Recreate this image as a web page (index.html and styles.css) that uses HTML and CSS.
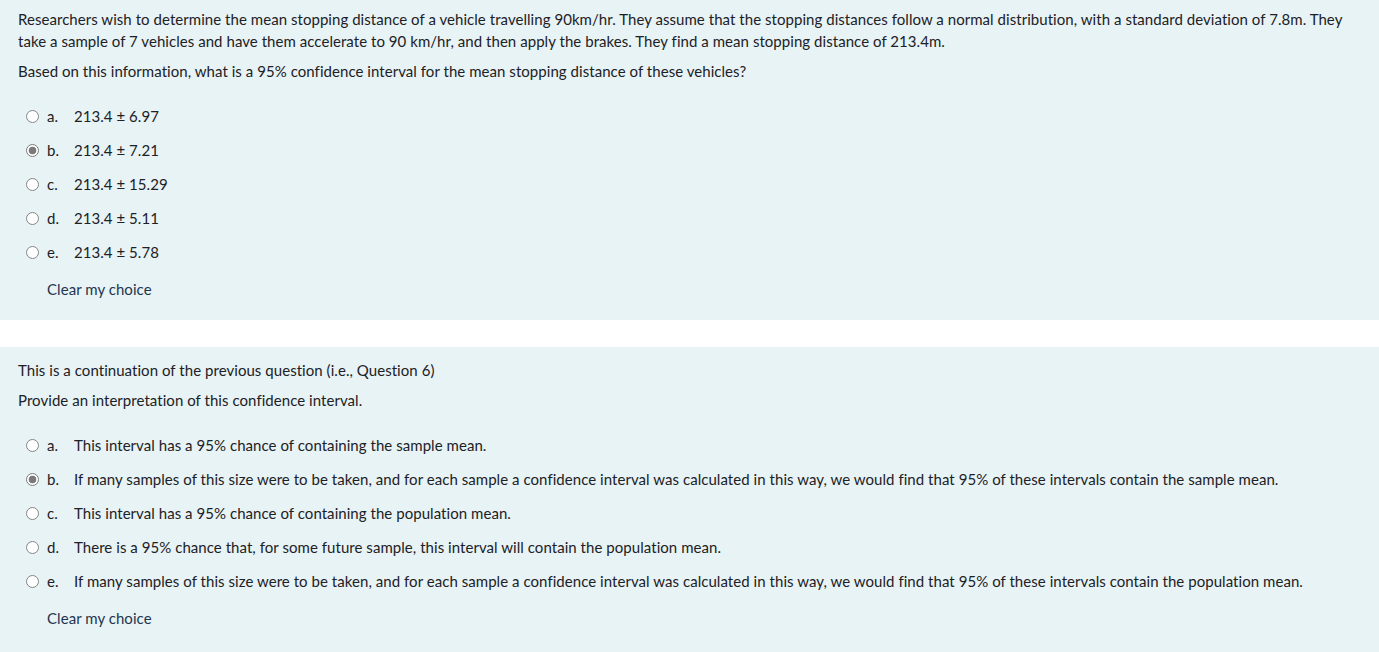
FILE: index.html
```html
<!DOCTYPE html>
<html lang="en">
<head>
<meta charset="utf-8">
<title>Quiz</title>
<link rel="stylesheet" href="styles.css">
</head>
<body>
<div class="que que-first">
  <div class="qtext">
    <p>Researchers wish to determine the mean stopping distance of a vehicle travelling 90km/hr. They assume that the stopping distances follow a normal distribution, with a standard deviation of 7.8m. They take a sample of 7 vehicles and have them accelerate to 90 km/hr, and then apply the brakes. They find a mean stopping distance of 213.4m.</p>
    <p>Based on this information, what is a 95% confidence interval for the mean stopping distance of these vehicles?</p>
  </div>
  <div class="answers">
    <div class="opt"><span class="radio"></span><span class="letter">a.</span><span class="atext">213.4 ± 6.97</span></div>
    <div class="opt"><span class="radio checked"></span><span class="letter">b.</span><span class="atext">213.4 ± 7.21</span></div>
    <div class="opt"><span class="radio"></span><span class="letter">c.</span><span class="atext">213.4 ± 15.29</span></div>
    <div class="opt"><span class="radio"></span><span class="letter">d.</span><span class="atext">213.4 ± 5.11</span></div>
    <div class="opt"><span class="radio"></span><span class="letter">e.</span><span class="atext">213.4 ± 5.78</span></div>
  </div>
  <a class="clear" href="#">Clear my choice</a>
</div>
<div class="que">
  <div class="qtext">
    <p>This is a continuation of the previous question (i.e., Question 6)</p>
    <p>Provide an interpretation of this confidence interval.</p>
  </div>
  <div class="answers">
    <div class="opt"><span class="radio"></span><span class="letter">a.</span><span class="atext">This interval has a 95% chance of containing the sample mean.</span></div>
    <div class="opt"><span class="radio checked"></span><span class="letter">b.</span><span class="atext">If many samples of this size were to be taken, and for each sample a confidence interval was calculated in this way, we would find that 95% of these intervals contain the sample mean.</span></div>
    <div class="opt"><span class="radio"></span><span class="letter">c.</span><span class="atext">This interval has a 95% chance of containing the population mean.</span></div>
    <div class="opt"><span class="radio"></span><span class="letter">d.</span><span class="atext">There is a 95% chance that, for some future sample, this interval will contain the population mean.</span></div>
    <div class="opt"><span class="radio"></span><span class="letter">e.</span><span class="atext">If many samples of this size were to be taken, and for each sample a confidence interval was calculated in this way, we would find that 95% of these intervals contain the population mean.</span></div>
  </div>
  <a class="clear" href="#">Clear my choice</a>
</div>
</body>
</html>
```

FILE: styles.css
```css
html, body {
  margin: 0;
  padding: 0;
  background: #ffffff;
}
body {
  font-family: "Lato", "Liberation Sans", sans-serif;
  font-size: 15px;
  line-height: 22px;
  letter-spacing: 0.05px;
  font-variant-ligatures: none;
  color: #1d2125;
}
.que {
  background: #e7f3f5;
  padding: 12px 18px 24px 18px;
  margin-bottom: 27px;
}
.que-first {
  padding-top: 8px;
  padding-bottom: 20px;
}
.qtext p {
  margin: 0 0 8px 0;
}
.qtext p:last-child {
  margin-bottom: 0;
}
.answers {
  margin-top: 17px;
  padding-left: 8px;
}
.opt {
  display: flex;
  align-items: center;
  height: 34px;
}
.radio {
  flex: none;
  width: 11px;
  height: 11px;
  border: 1px solid #858585;
  border-radius: 50%;
  background: #ffffff;
  margin-right: 8px;
}
.radio.checked {
  border-color: #7b7b7b;
  background: radial-gradient(circle, #7a7a7a 0, #7a7a7a 3.5px, #ffffff 4.2px);
}
.letter {
  width: 27px;
  flex: none;
}
.clear {
  display: inline-block;
  margin-top: 9px;
  margin-left: 29px;
  color: #1f3550;
  text-decoration: none;
}
```
